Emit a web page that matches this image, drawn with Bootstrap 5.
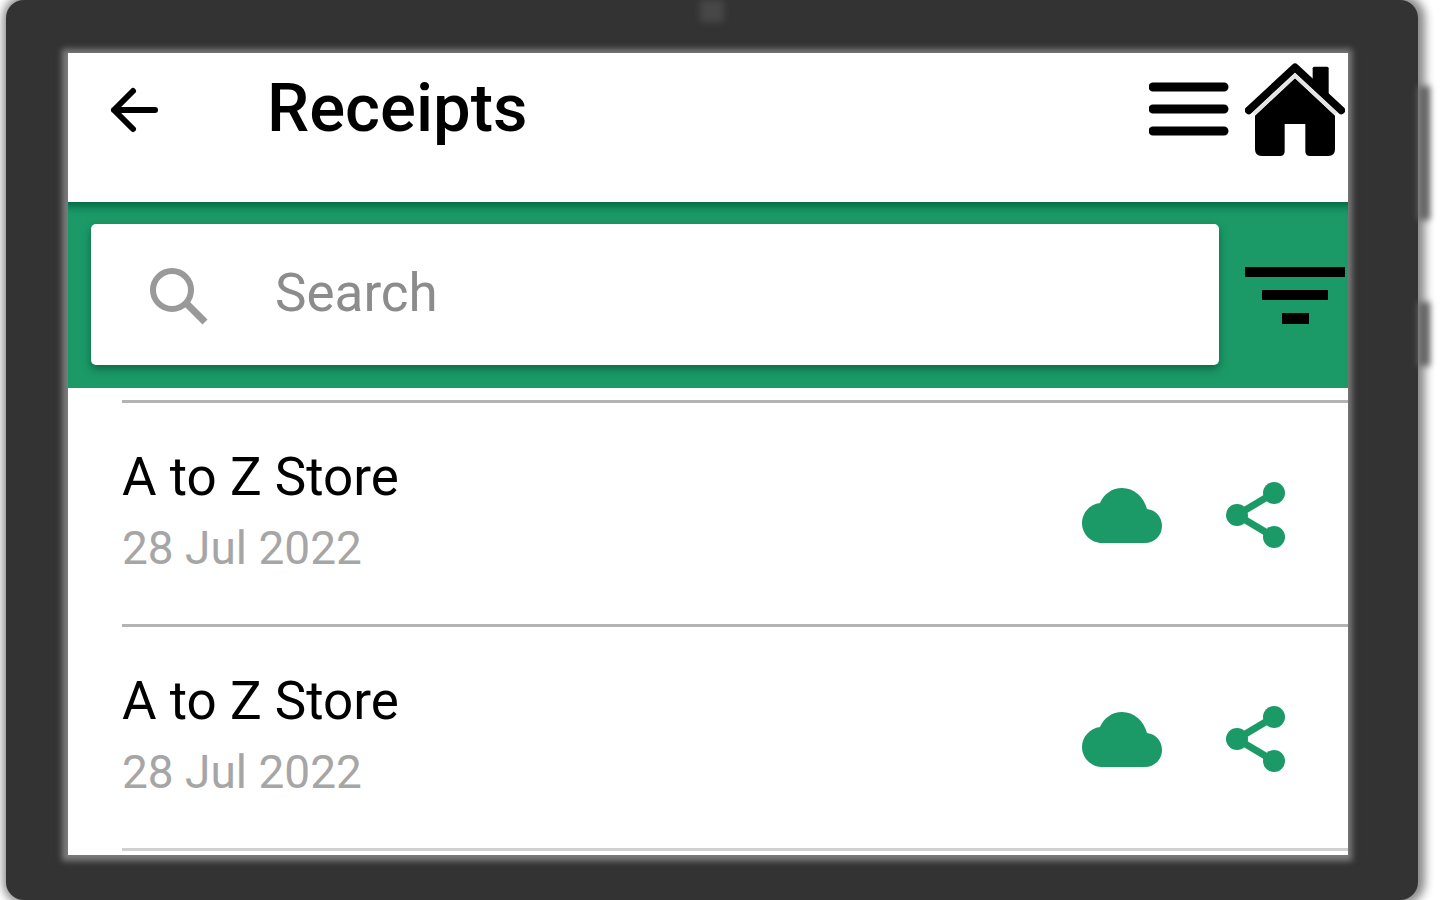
<!DOCTYPE html>
<html lang="en">
<head>
<meta charset="utf-8">
<meta name="viewport" content="width=device-width, initial-scale=1">
<title>Receipts</title>
<link href="https://cdn.jsdelivr.net/npm/bootstrap@5.3.0/dist/css/bootstrap.min.css" rel="stylesheet">
<style>
  :root { --brand: #1b9a68; --bezel: #333; }
  body { font-family: Roboto, "Liberation Sans", sans-serif; color: #000; background: #fff; }
  svg { display: block; fill: currentColor; }
  .device {
    margin: 0 22px 0 6px; padding: 53px 70px 45px 62px;
    background: var(--bezel); border-radius: 18px;
    box-shadow: 2px 0 10px 5px #888;
  }
  .camera { top: 0; left: 50%; width: 24px; height: 22px; margin-left: -12px; background: #474747; filter: blur(3px); }
  .side-key { right: -12px; width: 12px; background: #666; filter: blur(3px); z-index: -1; }
  .key-power { top: 86px; height: 134px; }
  .key-volume { top: 302px; height: 64px; }
  .screen { box-shadow: -1px 1px 6px 5px #7c7c7c; }
  .icon-btn { padding: 0; border: 0; background: none; color: inherit; }
  .topbar { padding: 0 3px 35px 30px; }
  .topbar-row { height: 114px; }
  .title { font-size: 67px; line-height: 72px; font-weight: 500; margin: 0 0 0 97px; padding-bottom: 5px; }
  .searchbar { background: var(--brand); padding: 22px 3px 23px 23px; gap: 26px; box-shadow: inset 0 12px 10px -8px #00643e; }
  .search-field { height: 141px; padding: 0 50px; gap: 58px; border-radius: 5px; box-shadow: 0 4px 8px #00462b99; color: #999; }
  .search-field input { font-size: 53px; line-height: 64px; color: #000; border: 0; outline: 0; padding: 0 0 4px; background: none; min-width: 0; }
  .search-field input::placeholder { color: #8c8c8c; opacity: 1; }
  .receipts { padding: 12px 0 0 54px; }
  .receipt { border-top: 3px solid #b3b3b3; padding: 38px 52px 41px 0; }
  .receipts-end { border-top: 3px solid #d0d0d0; height: 7px; }
  .store { font-size: 53px; line-height: 72px; font-weight: 400; margin: 0; }
  .date { font-size: 46px; line-height: 70px; color: #a6a6a6; margin: 0; }
  .actions { color: var(--brand); gap: 54px; padding-top: 6px; }
</style>
</head>
<body>
<svg class="d-none" aria-hidden="true">
  <symbol id="cloud" viewBox="0 0 80 80"><path d="M20 68C9 68 0 59 0 48c0-10 8-19 18-20C22 19 30 13 40 13c12 0 22 9 25 21 9 1 15 8 15 17 0 10-8 17-17 17z"/></symbol>
  <symbol id="share" viewBox="0 0 80 80"><circle cx="58" cy="18" r="11"/><circle cx="21" cy="40" r="11"/><circle cx="58" cy="62" r="11"/><path d="M58 18 21 40l37 22" fill="none" stroke="currentColor" stroke-width="7"/></symbol>
</svg>

<div class="device position-relative z-0 min-vh-100 d-flex flex-column">
  <span class="camera position-absolute"></span>
  <span class="side-key key-power position-absolute"></span>
  <span class="side-key key-volume position-absolute"></span>

  <main class="screen bg-white flex-fill">
    <header class="topbar">
      <div class="topbar-row d-flex align-items-center">
        <button type="button" class="icon-btn" aria-label="Back">
          <svg width="72" height="72" viewBox="0 0 72 72"><path d="M57 36H16M35 17 16 36l19 19" fill="none" stroke="currentColor" stroke-width="6" stroke-linecap="round" stroke-linejoin="round"/></svg>
        </button>
        <h1 class="title">Receipts</h1>
        <button type="button" class="icon-btn ms-auto" aria-label="Menu">
          <svg width="80" height="56" viewBox="0 0 80 56"><path d="M4 5h71M4 27h71M4 49h71" stroke="currentColor" stroke-width="9" stroke-linecap="round"/></svg>
        </button>
        <a href="#" class="text-black ms-3" aria-label="Home">
          <svg width="100" height="95" viewBox="0 0 300 285">
            <path d="M203 16q0-5 5-5h38q5 0 5 5v78l-48-44z"/>
            <path d="M11 142 150 13l139 129" fill="none" stroke="currentColor" stroke-width="23" stroke-linecap="round" stroke-linejoin="round"/>
            <path d="M30 158 150 46l120 112v101q0 20-20 20h-55q-14 0-14-14v-82h-62v82q0 14-14 14H50q-20 0-20-20z"/>
            <path d="M27 152 150 38l123 114" fill="none" stroke="#e4e4e4" stroke-width="10"/>
          </svg>
        </a>
      </div>
    </header>

    <form class="searchbar d-flex align-items-center" role="search">
      <label class="search-field bg-white d-flex align-items-center flex-fill">
        <svg width="76" height="76" viewBox="0 0 76 76" aria-hidden="true"><path d="M45 46 64 65" fill="none" stroke="currentColor" stroke-width="7"/><circle cx="31" cy="33" r="19" fill="none" stroke="currentColor" stroke-width="6"/></svg>
        <input type="search" class="flex-fill" placeholder="Search" aria-label="Search receipts">
      </label>
      <button type="button" class="icon-btn" aria-label="Filter">
        <svg width="100" height="58" viewBox="0 0 100 58"><path d="M0 1h100v10H0zM17 24h66v10H17zM37 47h27v11H37z"/></svg>
      </button>
    </form>

    <section class="receipts" aria-label="Receipts">
      <article class="receipt d-flex align-items-center">
        <div class="flex-fill">
          <h2 class="store">A to Z Store</h2>
          <p class="date">28 Jul 2022</p>
        </div>
        <div class="actions d-flex">
          <button type="button" class="icon-btn" aria-label="Cloud backup"><svg width="80" height="80"><use href="#cloud"/></svg></button>
          <button type="button" class="icon-btn" aria-label="Share"><svg width="80" height="80"><use href="#share"/></svg></button>
        </div>
      </article>
      <article class="receipt d-flex align-items-center">
        <div class="flex-fill">
          <h2 class="store">A to Z Store</h2>
          <p class="date">28 Jul 2022</p>
        </div>
        <div class="actions d-flex">
          <button type="button" class="icon-btn" aria-label="Cloud backup"><svg width="80" height="80"><use href="#cloud"/></svg></button>
          <button type="button" class="icon-btn" aria-label="Share"><svg width="80" height="80"><use href="#share"/></svg></button>
        </div>
      </article>
      <div class="receipts-end"></div>
    </section>
  </main>
</div>
<script src="https://cdn.jsdelivr.net/npm/bootstrap@5.3.0/dist/js/bootstrap.bundle.min.js"></script>
</body>
</html>
